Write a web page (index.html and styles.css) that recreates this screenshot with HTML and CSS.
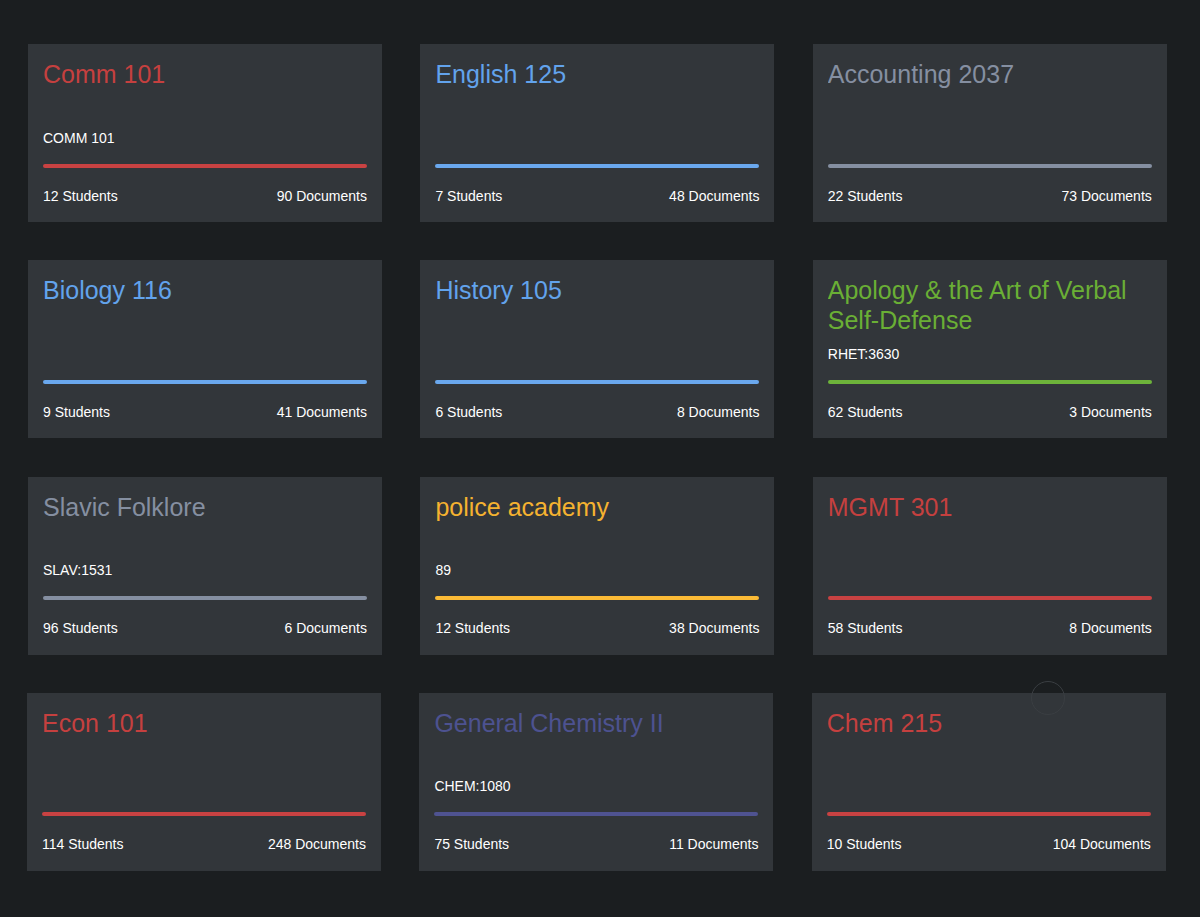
FILE: index.html
```html
<!DOCTYPE html>
<html>
<head>
<meta charset="utf-8">
<link rel="stylesheet" href="styles.css">
</head>
<body>
<div class="grid">
  <div class="card red"><div class="title">Comm 101</div><div class="code">COMM 101</div><div class="bar"></div><div class="foot"><span>12 Students</span><span>90 Documents</span></div></div>
  <div class="card blue"><div class="title">English 125</div><div class="code"></div><div class="bar"></div><div class="foot"><span>7 Students</span><span>48 Documents</span></div></div>
  <div class="card gray"><div class="title">Accounting 2037</div><div class="code"></div><div class="bar"></div><div class="foot"><span>22 Students</span><span>73 Documents</span></div></div>

  <div class="card blue"><div class="title">Biology 116</div><div class="code"></div><div class="bar"></div><div class="foot"><span>9 Students</span><span>41 Documents</span></div></div>
  <div class="card blue"><div class="title">History 105</div><div class="code"></div><div class="bar"></div><div class="foot"><span>6 Students</span><span>8 Documents</span></div></div>
  <div class="card green"><div class="title">Apology &amp; the Art of Verbal Self-Defense</div><div class="code">RHET:3630</div><div class="bar"></div><div class="foot"><span>62 Students</span><span>3 Documents</span></div></div>

  <div class="card gray"><div class="title">Slavic Folklore</div><div class="code">SLAV:1531</div><div class="bar"></div><div class="foot"><span>96 Students</span><span>6 Documents</span></div></div>
  <div class="card yellow"><div class="title">police academy</div><div class="code">89</div><div class="bar"></div><div class="foot"><span>12 Students</span><span>38 Documents</span></div></div>
  <div class="card red"><div class="title">MGMT 301</div><div class="code"></div><div class="bar"></div><div class="foot"><span>58 Students</span><span>8 Documents</span></div></div>

  <div class="card red last"><div class="title">Econ 101</div><div class="code"></div><div class="bar"></div><div class="foot"><span>114 Students</span><span>248 Documents</span></div></div>
  <div class="card purple last"><div class="title">General Chemistry II</div><div class="code">CHEM:1080</div><div class="bar"></div><div class="foot"><span>75 Students</span><span>11 Documents</span></div></div>
  <div class="card red last"><div class="title">Chem 215</div><div class="code"></div><div class="bar"></div><div class="foot"><span>10 Students</span><span>104 Documents</span></div></div>
</div>
<div class="ripple"></div>
</body>
</html>
```

FILE: styles.css
```css
html, body {
  margin: 0;
  padding: 0;
  background: #1b1e20;
  font-family: "Liberation Sans", Arial, Helvetica, sans-serif;
  color: #ffffff;
}

.grid {
  display: grid;
  grid-template-columns: repeat(3, 354px);
  column-gap: 38.4px;
  row-gap: 38.33px;
  padding: 44px 0 0 28px;
}

.card {
  background: #32363a;
  height: 178px;
  box-sizing: border-box;
  padding: 16px 15px 0 15px;
  display: flex;
  flex-direction: column;
}

.card.last {
  transform: translateX(-1px);
}

.title {
  font-size: 25px;
  line-height: 29.5px;
  height: 59px;
  overflow: hidden;
}

.code {
  font-size: 14px;
  line-height: 20px;
  height: 20px;
  margin-top: 8.5px;
}

.bar {
  height: 4px;
  border-radius: 2px;
  margin-top: 16px;
}

.foot {
  display: flex;
  justify-content: space-between;
  font-size: 14px;
  line-height: 20px;
  margin-top: 18px;
}

.red .title { color: #c5403f; }
.red .bar { background: #c94242; }
.blue .title { color: #62a3ec; }
.blue .bar { background: #6aa8ee; }
.gray .title { color: #858fa1; }
.gray .bar { background: #858fa1; }
.green .title { color: #6aaf35; }
.green .bar { background: #6db33a; }
.yellow .title { color: #f5b230; }
.yellow .bar { background: #fbbb36; }
.purple .title { color: #4d5290; }
.purple .bar { background: #4f5391; }

.ripple {
  position: absolute;
  left: 1031px;
  top: 681px;
  width: 32px;
  height: 32px;
  border: 1px solid #3a3e42;
  border-radius: 50%;
}
```
